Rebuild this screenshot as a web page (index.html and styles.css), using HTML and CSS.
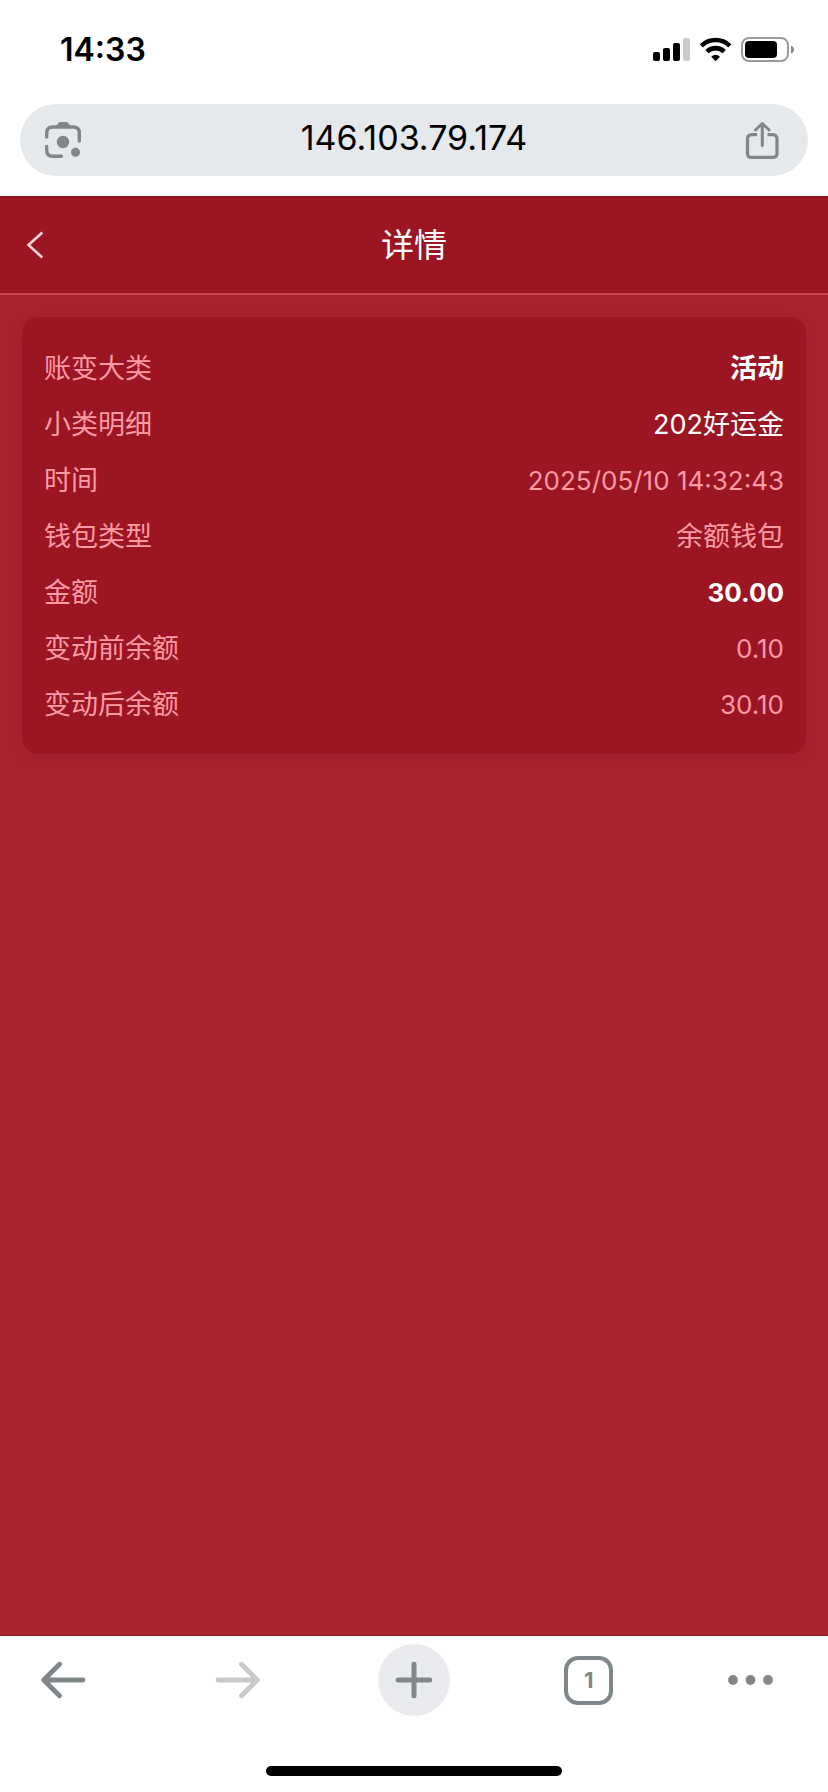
FILE: index.html
```html
<!DOCTYPE html>
<html lang="zh-CN">
<head>
<meta charset="utf-8">
<meta name="viewport" content="width=device-width, initial-scale=1">
<title>详情</title>
<link rel="stylesheet" href="styles.css">
</head>
<body>
<div class="status-bar">
  <time class="clock">14:33</time>
  <svg class="status-icons" viewBox="0 0 142 26" width="142" height="26" aria-hidden="true">
    <rect x="0" y="15" width="7" height="9" rx="2"/>
    <rect x="10" y="11" width="7" height="13" rx="2"/>
    <rect x="20" y="6" width="7" height="18" rx="2"/>
    <rect x="30" y="1" width="7" height="23" rx="2" fill="#cbcbcb"/>
    <g fill="none" stroke="#000" stroke-width="4.6">
      <path d="M48.400 8.800A20.400 20.400 0 0 1 76.800 8.800"/>
      <path d="M54 14.600A12.400 12.400 0 0 1 71.200 14.600"/>
    </g>
    <path d="M58.200 19.800Q62.600 15.600 67 19.800L62.600 24.200Z"/>
    <rect x="89" y="1" width="46" height="23" rx="7" fill="none" stroke="#9b9b9b" stroke-width="2"/>
    <rect x="92" y="4" width="32" height="17" rx="4"/>
    <path d="M138 8.500Q141 9.500 141 12.500T138 16.500Z" fill="#8b8b8b"/>
  </svg>
</div>
<div class="address-row">
  <div class="address-bar">
    <button class="icon-button" type="button" aria-label="相机搜索">
      <svg viewBox="0 0 38 38" width="38" height="38" aria-hidden="true">
        <g fill="none" stroke="#7f878a" stroke-width="3.400" stroke-linecap="round">
          <path d="M2.700 16V12Q2.700 6 8.700 6H29.300Q35.300 6 35.300 12V20"/>
          <path d="M2.700 25.500V29Q2.700 35.300 8.700 35.300H17.500"/>
        </g>
        <path d="M11 6.500L14 2.300Q14.900 1 16.500 1H22Q23.600 1 24.500 2.300L27.500 6.500Z" fill="#7f878a"/>
        <circle cx="19" cy="21" r="6.200" fill="#7f878a"/>
        <circle cx="31.500" cy="31.200" r="4.500" fill="#7f878a"/>
      </svg>
    </button>
    <input class="address" type="text" value="146.103.79.174" aria-label="网址">
    <button class="icon-button" type="button" aria-label="分享">
      <svg viewBox="0 0 38 38" width="38" height="38" aria-hidden="true" fill="none" stroke="#7f878a" stroke-width="3.200">
        <path d="M14 13.600H9Q4.500 13.600 4.500 18V32.500Q4.500 36.400 9 36.400H29.500Q34 36.400 34 32.500V18Q34 13.600 29.500 13.600H24.500"/>
        <path d="M19.300 24.500V2.800M12.500 9L19.300 2.500L26.100 9" stroke-width="3" stroke-linecap="round" stroke-linejoin="round"/>
      </svg>
    </button>
  </div>
</div>
<div class="page">
  <header class="page-header">
    <button class="back" type="button" aria-label="返回">
      <svg viewBox="0 0 18 28" width="18" height="28" fill="none" stroke="#fed5db" stroke-width="2.600" aria-hidden="true"><path d="M16.300 1.500L2.500 14L16.300 26.500"/></svg>
    </button>
    <h1 class="title">详情</h1>
  </header>
  <main class="content">
    <dl class="card">
      <div class="row"><dt>账变大类</dt><dd class="strong">活动</dd></div>
      <div class="row"><dt>小类明细</dt><dd class="bright">202好运金</dd></div>
      <div class="row"><dt>时间</dt><dd class="number">2025/05/10 14:32:43</dd></div>
      <div class="row"><dt>钱包类型</dt><dd>余额钱包</dd></div>
      <div class="row"><dt>金额</dt><dd class="number strong">30.00</dd></div>
      <div class="row"><dt>变动前余额</dt><dd class="number">0.10</dd></div>
      <div class="row"><dt>变动后余额</dt><dd class="number">30.10</dd></div>
    </dl>
  </main>
</div>
<footer class="browser-footer">
  <nav class="toolbar" aria-label="浏览器工具栏">
    <button class="tool" type="button" aria-label="后退">
      <svg viewBox="0 0 46 38" width="46" height="38" fill="none" stroke="#7f878a" stroke-width="4.800" stroke-linecap="round" stroke-linejoin="round" aria-hidden="true"><path d="M43 19H4M19.500 3.200L3.700 19L19.500 34.800"/></svg>
    </button>
    <button class="tool" type="button" aria-label="前进" disabled>
      <svg viewBox="0 0 46 38" width="46" height="38" fill="none" stroke="#c9c9c9" stroke-width="4.800" stroke-linecap="round" stroke-linejoin="round" aria-hidden="true"><path d="M3 19H42M26.500 3.200L42.300 19L26.500 34.800"/></svg>
    </button>
    <button class="tool new-tab" type="button" aria-label="新标签页">
      <svg viewBox="0 0 38 38" width="38" height="38" fill="none" stroke="#7f878a" stroke-width="5" stroke-linecap="round" aria-hidden="true"><path d="M3.200 19H34.800M19 3.200V34.800"/></svg>
    </button>
    <button class="tool" type="button" aria-label="标签页：1"><span class="tab-count">1</span></button>
    <button class="tool menu" type="button" aria-label="菜单">
      <svg viewBox="0 0 46 10" width="46" height="10" fill="#7f878a" aria-hidden="true"><circle cx="5" cy="5" r="4.900"/><circle cx="22.500" cy="5" r="4.900"/><circle cx="40" cy="5" r="4.900"/></svg>
    </button>
  </nav>
  <div class="home-indicator"></div>
</footer>
</body>
</html>
```
FILE: styles.css
```css
* { box-sizing: border-box; }

body {
  display: flex;
  flex-direction: column;
  min-height: 100vh;
  margin: 0;
  background: #fff;
  color: #000;
  font-family: Inter, "Noto Sans CJK SC", sans-serif;
}

button {
  display: flex;
  align-items: center;
  justify-content: center;
  padding: 0;
  border: 0;
  background: none;
}

.status-bar {
  display: flex;
  align-items: center;
  justify-content: space-between;
  padding: 30px 33px 34px 60px;
}

.clock {
  font-size: 32px;
  font-weight: 600;
  line-height: 40px;
}

.address-row { padding: 0 20px 20px; }

.address-bar {
  display: flex;
  align-items: center;
  height: 72px;
  padding: 0 27px 0 24px;
  border-radius: 36px;
  background: #e5e9ec;
}

.icon-button {
  width: 38px;
  height: 40px;
}

.address {
  flex: 1;
  min-width: 0;
  padding: 0 0 4px 3px;
  border: 0;
  background: none;
  color: #000;
  font: 400 34px/40px Inter, sans-serif;
  text-align: center;
}

.page {
  flex: 1;
  border-top: 1px solid #8a1320;
  border-bottom: 1px solid #8a1320;
  background: #a8222f;
}

.page-header {
  display: grid;
  grid-template-columns: 72px 1fr 72px;
  align-items: center;
  height: 98px;
  border-bottom: 2px solid #c84552;
  background: #9b1522;
}

.back {
  justify-content: flex-start;
  height: 96px;
  padding-left: 26px;
}

.title {
  margin: 0;
  color: #fff;
  font-size: 33px;
  font-weight: 400;
  line-height: 48px;
  text-align: center;
}

.content { padding: 22px; }

.card {
  margin: 0;
  padding: 24px 22px 21px;
  border-radius: 16px;
  background: #9b1522;
  box-shadow: 0 4px 14px rgba(148, 34, 44, 0.5);
}

.row {
  display: flex;
  align-items: center;
  justify-content: space-between;
  color: #fe9aa5;
  font-size: 27px;
  line-height: 56px;
}

.row dd { margin: 0; }
.row .number { font-size: 26px; }
.row .bright { color: #fff; }
.row .strong { color: #fff; font-weight: 700; }

.browser-footer { padding-bottom: 16px; }

.toolbar {
  display: flex;
  justify-content: space-between;
  padding: 8px 28px 50px 27px;
}

.tool {
  width: 72px;
  height: 72px;
  border-radius: 50%;
}

.new-tab { background: #e8eaed; }
.menu { justify-content: flex-start; }

.tab-count {
  width: 49px;
  height: 49px;
  border: 4px solid #7f878a;
  border-radius: 14px;
  color: #7f878a;
  font: 700 22px/41px Inter, sans-serif;
}

.home-indicator {
  width: 296px;
  height: 10px;
  margin: 0 auto;
  border-radius: 5px;
  background: #000;
}
```
